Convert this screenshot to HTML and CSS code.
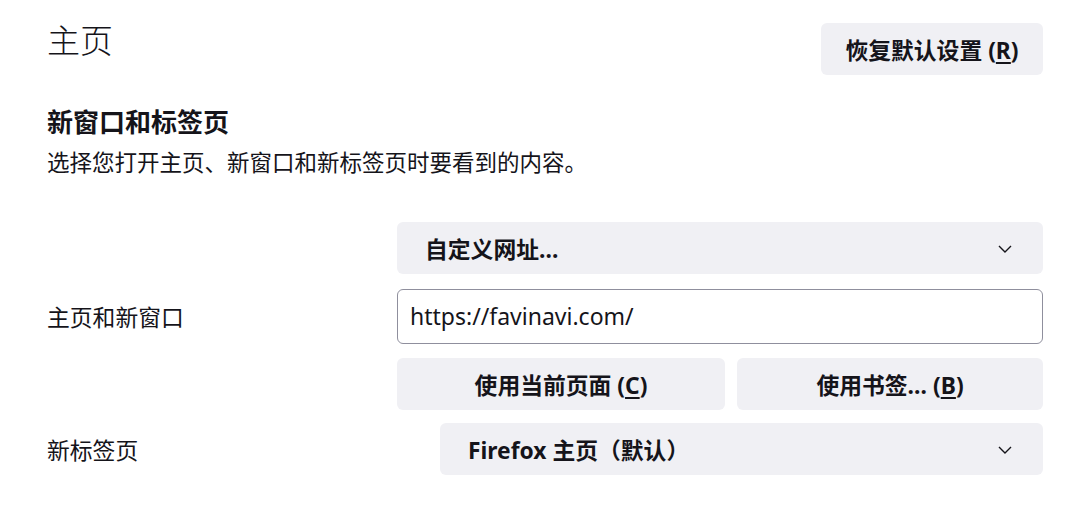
FILE: index.html
```html
<!DOCTYPE html>
<html lang="zh-CN">
<head>
<meta charset="utf-8">
<title>主页</title>
<link rel="stylesheet" href="styles.css">
</head>
<body>
<main class="page">
  <header class="header">
    <h1 class="title">主页</h1>
    <button class="btn btn-restore">恢复默认设置 (<u>R</u>)</button>
  </header>
  <section class="section">
    <h2 class="subtitle">新窗口和标签页</h2>
    <p class="desc">选择您打开主页、新窗口和新标签页时要看到的内容。</p>
    <div class="row row-home">
      <label class="label">主页和新窗口</label>
      <div class="controls">
        <div class="select">
          <span>自定义网址…</span>
          <svg class="chev" width="14" height="8" viewBox="0 0 14 8"><path d="M1 1l6 6 6-6" fill="none" stroke="#15141a" stroke-width="1.4"/></svg>
        </div>
        <div class="input">https://favinavi.com/</div>
        <div class="btn-row">
          <button class="btn btn-current">使用当前页面 (<u>C</u>)</button>
          <button class="btn btn-bookmark">使用书签… (<u>B</u>)</button>
        </div>
      </div>
    </div>
    <div class="row row-newtab">
      <label class="label">新标签页</label>
      <div class="select select-newtab">
        <span>Firefox 主页（默认）</span>
        <svg class="chev" width="14" height="8" viewBox="0 0 14 8"><path d="M1 1l6 6 6-6" fill="none" stroke="#15141a" stroke-width="1.4"/></svg>
      </div>
    </div>
  </section>
</main>
</body>
</html>
```
FILE: styles.css
```css
* { box-sizing: border-box; }
html, body { margin: 0; padding: 0; background: #fff; }
body {
  font-family: "Noto Sans", "Noto Sans CJK SC", sans-serif;
  color: #15141a;
  width: 1080px;
  height: 510px;
  overflow: hidden;
}
.page { padding: 23px 37px 0 47px; }
.header {
  display: flex;
  justify-content: space-between;
  align-items: flex-start;
}
.title {
  margin: 0;
  font-size: 33px;
  font-weight: 300;
  line-height: 36px;
}
.btn {
  font-family: "Noto Sans", "Noto Sans CJK SC", sans-serif;
  background: #f0f0f4;
  border: none;
  border-radius: 6px;
  color: #15141a;
  font-size: 22.8px;
  font-weight: 700;
  height: 52px;
  padding: 0 24px;
  cursor: pointer;
}
.btn u { text-decoration-thickness: 1.5px; text-underline-offset: 3px; }
.btn-restore { width: 222px; padding: 0; }
.section { margin-top: 30px; }
.subtitle {
  margin: 0;
  font-size: 26px;
  font-weight: 700;
  line-height: 34px;
}
.desc {
  margin: 8px 0 0;
  font-size: 22.5px;
  line-height: 32px;
}
.row { display: flex; align-items: center; }
.row-home { margin-top: 43px; }
.label { font-size: 22.8px; flex: 1; }
.controls {
  width: 646px;
  display: flex;
  flex-direction: column;
}
.select {
  height: 52px;
  background: #f0f0f4;
  border-radius: 6px;
  display: flex;
  align-items: center;
  justify-content: space-between;
  padding: 0 31px 0 28px;
  font-size: 22.8px;
  font-weight: 700;
}
.chev { display: block; margin-top: 1px; }
.input {
  margin-top: 15px;
  height: 55px;
  border: 1px solid #8f8f9d;
  border-radius: 6px;
  display: flex;
  align-items: center;
  padding: 0 12px 2px;
  font-size: 23px;
}
.btn-row {
  margin-top: 14px;
  display: flex;
  gap: 12px;
}
.btn-current { width: 328px; }
.btn-bookmark { flex: 1; }
.row-newtab { margin-top: 13px; }
.select-newtab { width: 603px; }
```
